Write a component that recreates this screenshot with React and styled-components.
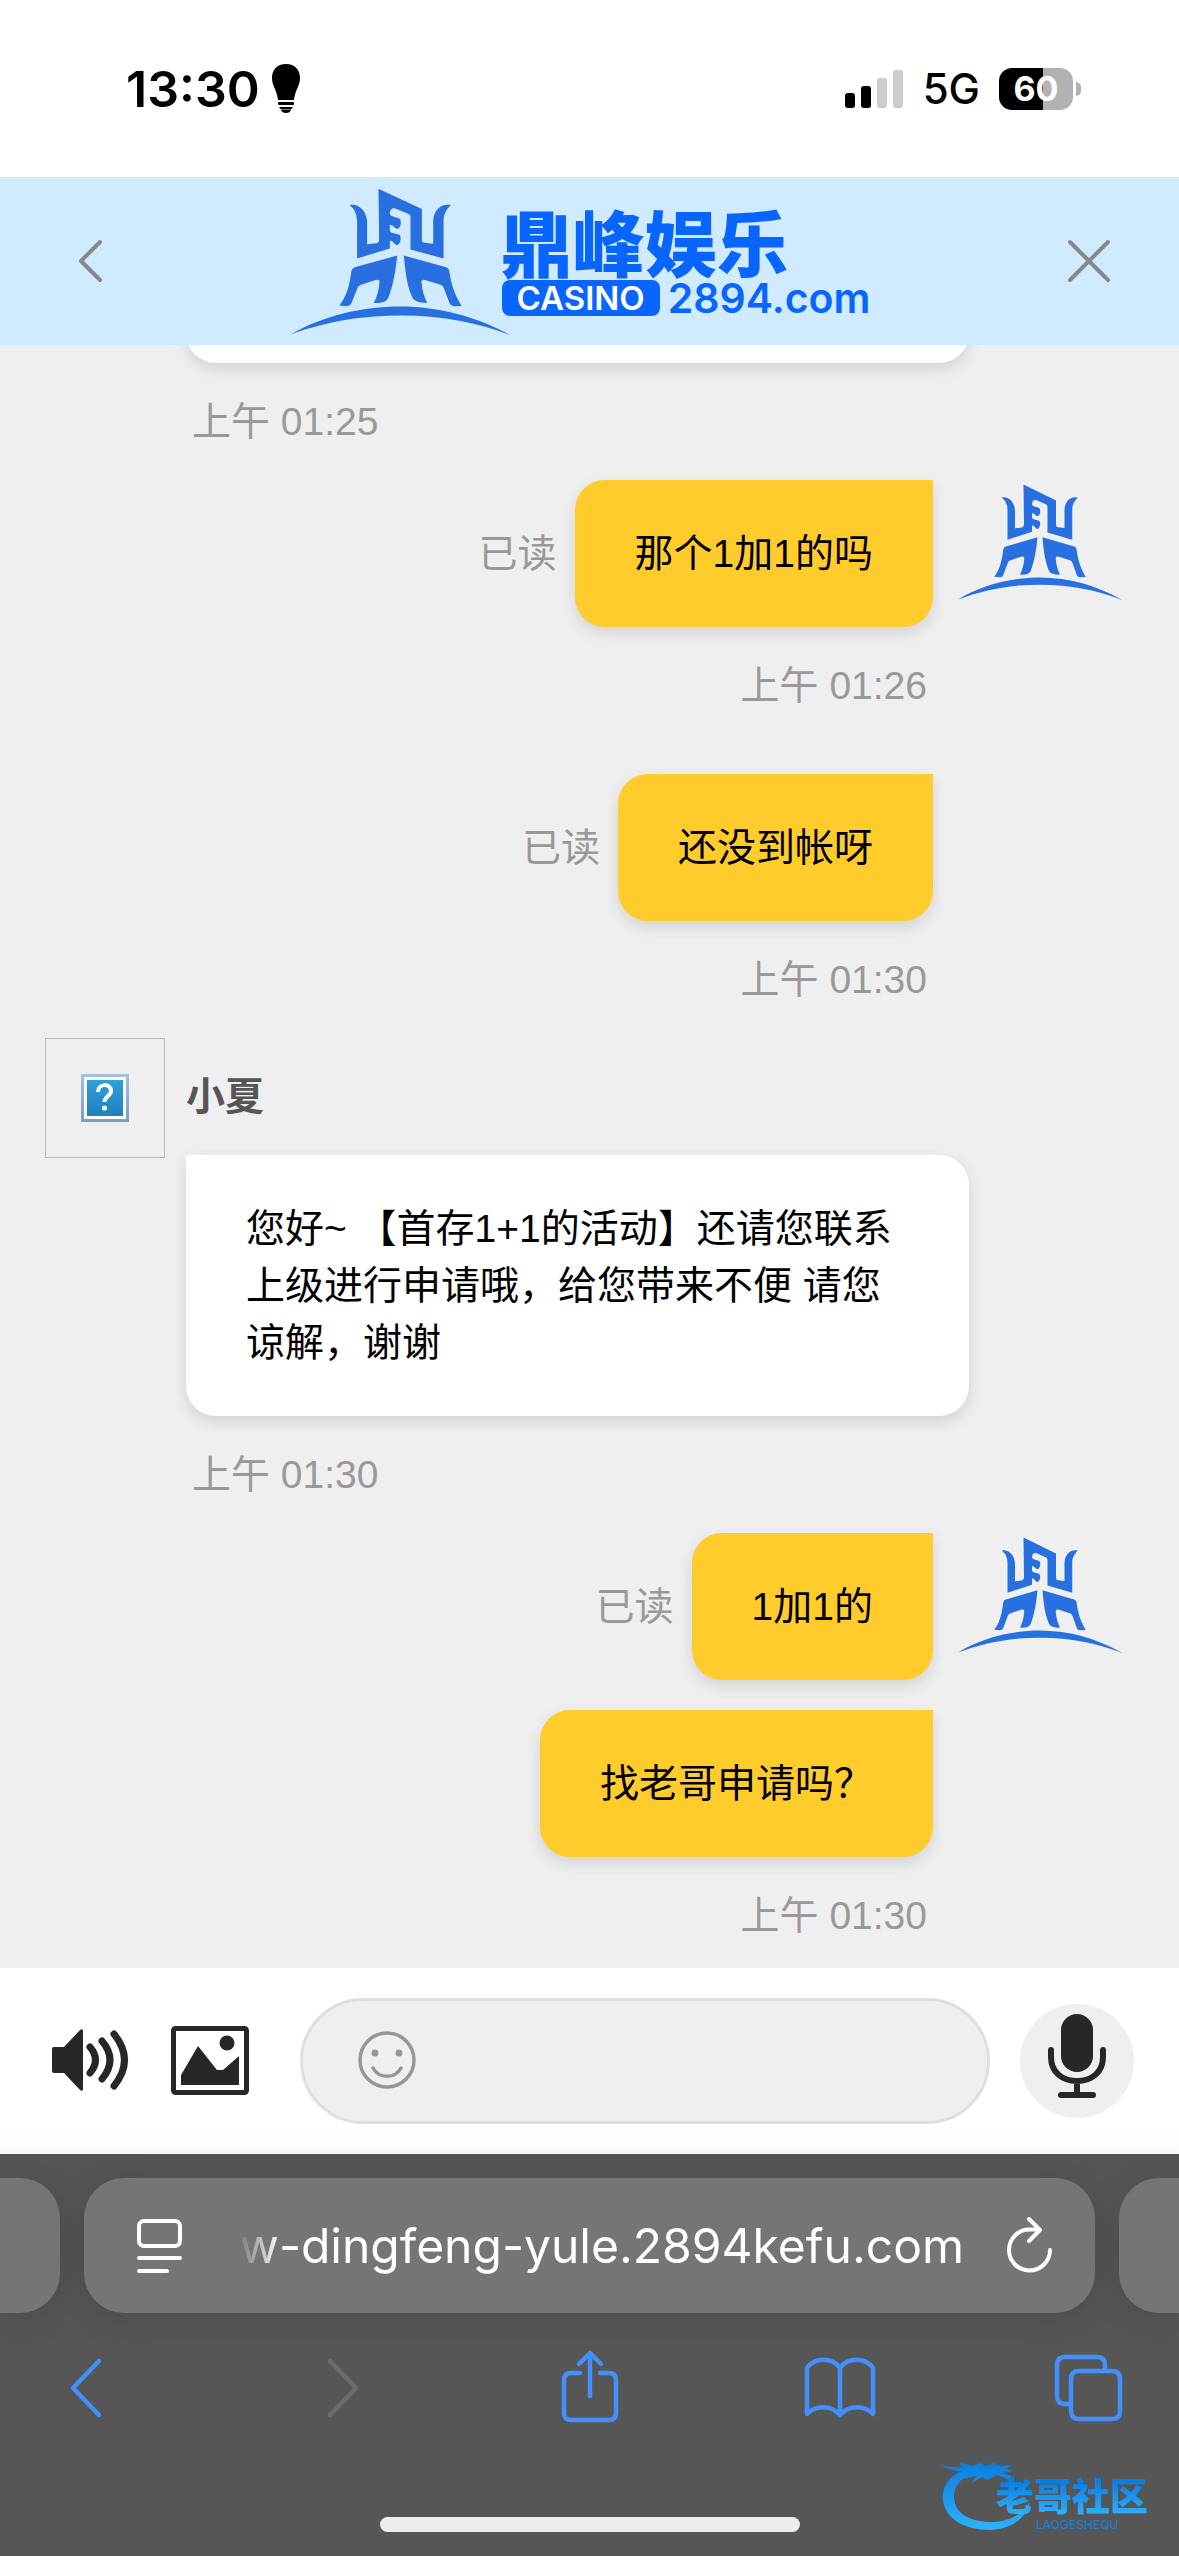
import React from "react";
import styled, { createGlobalStyle } from "styled-components";

const GlobalStyle = createGlobalStyle`
  * {
    box-sizing: border-box;
  }

  body {
    margin: 0;
    font-family: "Liberation Sans", "Noto Sans CJK SC", sans-serif;
  }

  button {
    display: flex;
    flex-shrink: 0;
    align-items: center;
    justify-content: center;
    padding: 0;
    border: none;
    background: none;
    cursor: pointer;
  }

  svg {
    display: block;
  }
`;

const Page = styled.div`
  display: flex;
  flex-direction: column;
  height: 100vh;
  background-color: #efefef;
`;

const StatusBar = styled.div`
  display: flex;
  flex-shrink: 0;
  align-items: center;
  justify-content: space-between;
  height: 177px;
  padding: 0 98px 0 126px;
  background-color: #fff;
  font-family: Inter, sans-serif;
`;

const StatusGroup = styled.div`
  display: flex;
  align-items: center;
  gap: ${(props) => props.$gap}px;
`;

const Clock = styled.span`
  font-size: 50px;
  font-weight: 600;
  line-height: 60px;
`;

const Network = styled.span`
  font-size: 42px;
  font-weight: 500;
  line-height: 60px;
`;

const Battery = styled.div`
  position: relative;
  display: flex;
  align-items: center;
  justify-content: center;
  width: 74px;
  height: 42px;
  margin-right: 8px;
  border-radius: 13px;
  background: linear-gradient(to right, #000 60%, #b2b2b2 60%);
  color: #fff;
  font-size: 34px;
  font-weight: 700;

  &::after {
    content: "";
    position: absolute;
    right: -8px;
    width: 5px;
    height: 14px;
    border-radius: 0 5px 5px 0;
    background-color: #b2b2b2;
  }
`;

const Header = styled.header`
  display: flex;
  flex-shrink: 0;
  align-items: center;
  justify-content: space-between;
  height: 168px;
  padding: 0 69px;
  background-color: #d0eaff;
`;

const Brand = styled.a`
  display: flex;
  align-items: center;
  color: #0865ff;
  text-decoration: none;
`;

const BrandText = styled.div`
  width: 394px;
  margin-left: -15px;
`;

const BrandName = styled.div`
  margin-bottom: 6px;
  padding-left: 6px;
  font-family: "Noto Sans CJK SC", sans-serif;
  font-size: 72px;
  font-weight: 900;
  line-height: 68px;
  white-space: nowrap;
`;

const BrandSite = styled.div`
  display: flex;
  align-items: center;
  gap: 8px;
  padding-left: 7px;
  font-family: Inter, sans-serif;
  font-size: 41px;
  font-weight: 600;
  line-height: 36px;
`;

const CasinoTag = styled.span`
  padding: 0 15px;
  border-radius: 8px;
  background-color: #0865ff;
  color: #fff;
  font-size: 33px;
`;

const Chat = styled.main`
  flex: 1;
  min-height: 0;
  overflow-y: auto;
  scrollbar-width: none;
`;

const Incoming = styled.section`
  display: flex;
  align-items: flex-start;
  gap: 21px;
  padding: 0 210px 0 45px;
`;

const Outgoing = styled.section`
  display: flex;
  align-items: flex-start;
  justify-content: flex-end;
  gap: 25px;
  padding-right: 57px;
`;

const AvatarSlot = styled.div`
  display: flex;
  flex-shrink: 0;
  justify-content: center;
  width: ${(props) => props.$width}px;
  padding-top: 4px;
`;

const MissingAvatar = styled.div`
  display: flex;
  flex-shrink: 0;
  align-items: center;
  justify-content: center;
  width: 120px;
  height: 120px;
  border: 1px solid #bbb;
`;

const Messages = styled.div`
  display: flex;
  flex: 1;
  flex-direction: column;
  align-items: ${(props) => (props.$own ? "flex-end" : "stretch")};
`;

const MessageRow = styled.div`
  display: flex;
  align-items: center;
  gap: 18px;
  margin-top: ${(props) => (props.$follow ? 30 : 0)}px;
`;

const AgentName = styled.h2`
  margin: 0;
  color: #555;
  font-size: 39px;
  font-weight: 700;
  line-height: 117px;
`;

const Bubble = styled.div`
  min-height: 147px;
  padding: 45px 60px;
  border-radius: ${(props) => (props.$own ? "30px 0 30px 30px" : "0 30px 30px 30px")};
  background-color: ${(props) => (props.$own ? "#ffcc2b" : "#fff")};
  box-shadow: 0 6px 15px rgba(0, 0, 0, 0.12);
  color: #000;
  font-size: 39px;
  line-height: 57px;
`;

// Only the lower edge of this one is left in view under the header
const ScrolledBubble = styled(Bubble)`
  margin-top: -129px;
`;

const ReadMark = styled.span`
  color: #999;
  font-size: 39px;
  line-height: 57px;
`;

const Time = styled.time`
  display: block;
  padding: 0 6px;
  color: #999;
  font-size: 39px;
  line-height: 117px;
`;

const Composer = styled.form`
  display: flex;
  flex-shrink: 0;
  align-items: center;
  height: 186px;
  padding: 0 45px 0 52px;
  background: linear-gradient(#fff 85%, #fafafa);
`;

const ToolButton = styled.button`
  margin-right: ${(props) => props.$space}px;
`;

const InputBox = styled.div`
  display: flex;
  flex: 1;
  align-items: center;
  gap: 24px;
  min-width: 0;
  height: 126px;
  padding: 0 54px;
  border: 3px solid #dfdfdf;
  border-radius: 63px;
  background-color: #efefef;
`;

const MessageInput = styled.input`
  flex: 1;
  min-width: 0;
  border: none;
  outline: none;
  background: none;
  font-family: inherit;
  font-size: 39px;
`;

const MicButton = styled.button`
  width: 114px;
  height: 114px;
  margin-left: 30px;
  border-radius: 50%;
  background-color: #efefef;
`;

const Browser = styled.footer`
  position: relative;
  flex-shrink: 0;
  height: 402px;
  padding-top: 24px;
  overflow: hidden;
  background-color: #565656;
`;

const TabStrip = styled.div`
  display: flex;
  gap: 24px;
`;

const SideTab = styled.div`
  flex-shrink: 0;
  width: 60px;
  height: 135px;
  border-radius: ${(props) => (props.$left ? "0 40px 40px 0" : "40px 0 0 40px")};
  background-color: #757575;
  box-shadow: 0 3px 36px rgba(0, 0, 0, 0.14);
`;

const AddressBar = styled.div`
  display: flex;
  flex: 1;
  align-items: center;
  justify-content: space-between;
  min-width: 0;
  height: 135px;
  padding: 0 41px 0 51px;
  border-radius: 40px;
  background-color: #757575;
  box-shadow: 0 3px 36px rgba(0, 0, 0, 0.14);
`;

const Address = styled.input`
  flex: 1;
  min-width: 0;
  margin: 0 42px 0 54px;
  padding: 0;
  border: none;
  outline: none;
  background: none;
  color: #fff;
  font-family: Inter, sans-serif;
  font-size: 48px;
  text-align: right;
  mask-image: linear-gradient(to right, transparent, #000 42px);
`;

const Toolbar = styled.nav`
  display: flex;
  justify-content: space-between;
  padding: 37px 51px 0;
`;

const HomeIndicator = styled.div`
  width: 420px;
  height: 15px;
  margin: 91px auto 0;
  border-radius: 8px;
  background-color: #ededed;
`;

const Watermark = styled.svg`
  position: absolute;
  right: 0;
  bottom: 0;
`;

function Emblem({ width, height }) {
  return (
    <svg
      width={width}
      height={height}
      viewBox="34 25 656 440"
      preserveAspectRatio="none"
      fill="#286fdf"
      aria-hidden="true"
    >
      <path d="M209 76C214 82 220 84 224 92Q232 105 232 124V236L330 206V183C340 181 342 194 352 196C363 192 365 175 360 166C350 159 334 163 330 152V136C340 133 343 146 352 147C363 145 365 128 361 118C350 110 333 113 330 102C330 92 336 83 346 86L385 102Q392 105 392 112V209L491 236V122C492 100 500 90 513 76C480 70 460 95 460 125V192L434 189Q426 188 426 180V88L296 27L298 178Q298 189 290 190L262 193V125C260 92 235 70 209 76Z" />
      <path d="M352 227L225 262Q217 265 215 273C208 330 197 352 179 377L203 379Q211 378 215 370L233 325Q235 318 242 315L285 301Q300 297 299 307Q297 340 282 369C305 370 321 366 326 352C341 314 348 270 352 227Z" />
      <path d="M372 227L499 262Q506 264 508 272C514 320 528 350 545 378L521 379Q512 378 509 370L492 325Q490 318 484 315L438 301Q424 297 425 307Q427 340 442 369C416 368 402 365 396 350C380 312 376 270 372 227Z" />
      <path d="M34 463C130 408 245 380 362 380C478 380 590 411 690 465C590 427 482 407 365 407C245 407 140 425 34 463Z" />
    </svg>
  );
}

function BulbIcon() {
  return (
    <svg width="30" height="50" viewBox="0 0 30 50">
      <path d="M15 0C6 0 1 6 1 14C1 22 6 26 7 36H23C24 26 29 22 29 14C29 6 24 0 15 0Z" />
      <rect x="7" y="38" width="16" height="3" rx="1" />
      <path d="M8 43H22L20 45.500H10ZM10 46H20Q19 49 15 49T10 46Z" />
    </svg>
  );
}

function SignalIcon() {
  return (
    <svg width="60" height="38" viewBox="0 0 60 38">
      <rect x="1" y="23" width="10" height="15" rx="3" />
      <rect x="17" y="16" width="10" height="22" rx="3" />
      <rect x="33" y="8" width="10" height="30" rx="3" fill="#ccc" />
      <rect x="49" y="0" width="10" height="38" rx="3" fill="#ccc" />
    </svg>
  );
}

function MissingIcon() {
  return (
    <svg width="48" height="48" viewBox="0 0 48 48">
      <defs>
        <linearGradient id="missingFrame" x1="0" y1="0" x2="0" y2="1">
          <stop offset="0" stopColor="#a3c0de" />
          <stop offset="1" stopColor="#789dcb" />
        </linearGradient>
        <linearGradient id="missingFill" x1="0" y1="0" x2="0" y2="1">
          <stop offset="0" stopColor="#2fa0d8" />
          <stop offset="1" stopColor="#2080c0" />
        </linearGradient>
      </defs>
      <rect width="48" height="48" fill="url(#missingFrame)" />
      <rect x="3" y="3" width="42" height="42" fill="#fff" />
      <rect x="6" y="6" width="36" height="36" fill="url(#missingFill)" />
      <path d="M17 18C17 9 30 9 30 17C30 22 23.500 22 23.500 28" fill="none" stroke="#fff" strokeWidth="4" />
      <circle cx="23.500" cy="34" r="2.600" fill="#fff" />
    </svg>
  );
}

function SpeakerIcon() {
  return (
    <svg width="77" height="64" viewBox="0 0 77 64" fill="none" stroke="#272727" strokeLinecap="round">
      <path
        d="M2 18H12L28 1Q31 -1 31 2V60Q31 63 28 61L12 44H2Q0 44 0 42V20Q0 18 2 18Z"
        fill="#272727"
        stroke="none"
      />
      <path d="M38 18Q49 31 38 44M50 12Q66 31 50 50M62 5Q83 31 62 57" strokeWidth="7" />
    </svg>
  );
}

function PictureIcon() {
  return (
    <svg width="78" height="70" viewBox="0 0 78 70" fill="#272727">
      <rect x="2.500" y="2.500" width="73" height="64" rx="2" fill="none" stroke="#272727" strokeWidth="5" />
      <path d="M10 49L27 20L46 44H52L68 30V59H10Z" />
      <circle cx="56" cy="17" r="7.500" />
    </svg>
  );
}

function SmileIcon() {
  return (
    <svg width="60" height="60" viewBox="0 0 60 60" fill="none" stroke="#969696" strokeWidth="3.500" strokeLinecap="round">
      <circle cx="30" cy="29" r="27" />
      <path d="M16 37C22 48 38 48 44 37" />
      <circle cx="18" cy="22" r="3.500" fill="#969696" stroke="none" />
      <circle cx="42" cy="22" r="3.500" fill="#969696" stroke="none" />
    </svg>
  );
}

function MicIcon() {
  return (
    <svg width="60" height="94" viewBox="0 0 60 94" fill="none" stroke="#272727" strokeWidth="6" strokeLinecap="round">
      <rect x="14" y="0" width="32" height="58" rx="16" fill="#272727" stroke="none" />
      <path d="M4 36V43C4 58 15 67 30 67S56 58 56 43V36M30 68V80M14 81H46" />
    </svg>
  );
}

// Thin stroked icon of the browser tool bar
function ToolbarIcon({ color = "#448fff", d }) {
  return (
    <svg
      width="76"
      height="76"
      viewBox="0 0 76 76"
      fill="none"
      stroke={color}
      strokeWidth="4.500"
      strokeLinecap="round"
      strokeLinejoin="round"
    >
      <path d={d} />
    </svg>
  );
}

const toolbarItems = [
  { label: "后退", d: "M48 11L22 38L48 65" },
  { label: "前进", d: "M29 11L55 38L29 65", color: "#6b6b6b", disabled: true },
  {
    label: "分享",
    d: "M38 46V4M27 14L38 3L49 14M28 23H19Q12 23 12 30V63Q12 70 19 70H57Q64 70 64 63V30Q64 23 57 23H48",
  },
  {
    label: "书签",
    d: "M38 18C30 7 13 7 5 18V64C14 55 30 55 38 65C46 55 62 55 71 64V18C63 7 46 7 38 18ZM38 18V65",
  },
  {
    label: "标签页",
    d: "M27 21H60Q68 21 68 29V61Q68 69 60 69H27Q19 69 19 61V29Q19 21 27 21ZM18 54H13Q5 54 5 46V15Q5 7 13 7H45Q53 7 53 15V20",
  },
];

function WatermarkLogo() {
  return (
    <Watermark width="259" height="116" viewBox="0 0 259 116" aria-hidden="true">
      <defs>
        <linearGradient id="dragon" gradientUnits="userSpaceOnUse" x1="0" y1="22" x2="0" y2="88">
          <stop offset="0" stopColor="#087ee0" />
          <stop offset="1" stopColor="#2db0fc" />
        </linearGradient>
        <linearGradient id="dragonText" gradientUnits="userSpaceOnUse" x1="0" y1="42" x2="0" y2="74">
          <stop offset="0" stopColor="#087ee4" />
          <stop offset="1" stopColor="#2db0fc" />
        </linearGradient>
      </defs>
      <g fill="url(#dragon)">
        <path d="M50 29C31 32 22 45 23 60C25 79 45 90 70 90C91 89 107 78 110 62C102 75 88 82 71 82C50 82 34 73 34 57C34 47 39 39 50 35Z" />
        <path d="M21 25Q30 28 42 27L39 22L53 26L59 23L66 26L74 23L80 26L92 25L86 29L93 31L82 33L92 36L88 39L76 35L68 40L62 37L52 43L56 36L43 39L47 31Q30 32 21 25Z" />
      </g>
      <path d="M51 18Q66 25 78 25M65 17Q84 14 93 26" fill="none" stroke="#2a6695" strokeWidth="1" opacity="0.5" />
      <text
        x="76"
        y="70"
        fill="url(#dragonText)"
        fontFamily="Noto Sans CJK SC, sans-serif"
        fontSize="38"
        fontWeight="900"
      >
        老哥社区
      </text>
      <text x="116" y="89" fill="#1c7cc4" fontFamily="Inter, sans-serif" fontSize="12" fontWeight="500">
        LAOGESHEQU
      </text>
    </Watermark>
  );
}

function OwnGroup({ avatar, messages, time, follow }) {
  return (
    <Outgoing>
      <Messages $own>
        {messages.map((message, index) => (
          <MessageRow key={message.text} $follow={follow || index > 0}>
            {message.read && <ReadMark>已读</ReadMark>}
            <Bubble $own>{message.text}</Bubble>
          </MessageRow>
        ))}
        <Time>{time}</Time>
      </Messages>
      <AvatarSlot $width={164}>{avatar && <Emblem width={164} height={116} />}</AvatarSlot>
    </Outgoing>
  );
}

export default function App() {
  return (
    <>
      <GlobalStyle />
      <Page>
        <StatusBar>
          <StatusGroup $gap={11}>
            <Clock>13:30</Clock>
            <BulbIcon />
          </StatusGroup>
          <StatusGroup $gap={19}>
            <SignalIcon />
            <Network>5G</Network>
            <Battery>60</Battery>
          </StatusGroup>
        </StatusBar>

        <Header>
          <button type="button" aria-label="返回">
            <svg width="42" height="46" viewBox="0 0 42 46" fill="none" stroke="#888" strokeWidth="4" strokeLinecap="round" strokeLinejoin="round">
              <path d="M31 4L12 23L31 42" />
            </svg>
          </button>
          <Brand href="#">
            <Emblem width={219} height={147} />
            <BrandText>
              <BrandName>鼎峰娱乐</BrandName>
              <BrandSite>
                <CasinoTag>CASINO</CasinoTag>
                2894.com
              </BrandSite>
            </BrandText>
          </Brand>
          <button type="button" aria-label="关闭">
            <svg width="42" height="46" viewBox="0 0 42 46" fill="none" stroke="#888" strokeWidth="4" strokeLinecap="round">
              <path d="M2 4L40 42M40 4L2 42" />
            </svg>
          </button>
        </Header>

        <Chat>
          <Incoming>
            <AvatarSlot $width={120} />
            <Messages>
              <ScrolledBubble />
              <Time>上午 01:25</Time>
            </Messages>
          </Incoming>

          <OwnGroup avatar messages={[{ text: "那个1加1的吗", read: true }]} time="上午 01:26" />
          <OwnGroup follow messages={[{ text: "还没到帐呀", read: true }]} time="上午 01:30" />

          <Incoming>
            <MissingAvatar>
              <MissingIcon />
            </MissingAvatar>
            <Messages>
              <AgentName>小夏</AgentName>
              <Bubble>
                您好~ 【首存1+1的活动】还请您联系上级进行申请哦，给您带来不便 请您谅解，谢谢
              </Bubble>
              <Time>上午 01:30</Time>
            </Messages>
          </Incoming>

          <OwnGroup
            avatar
            messages={[{ text: "1加1的", read: true }, { text: "找老哥申请吗？" }]}
            time="上午 01:30"
          />
        </Chat>

        <Composer onSubmit={(e) => e.preventDefault()}>
          <ToolButton type="button" aria-label="声音" $space={42}>
            <SpeakerIcon />
          </ToolButton>
          <ToolButton type="button" aria-label="图片" $space={51}>
            <PictureIcon />
          </ToolButton>
          <InputBox>
            <button type="button" aria-label="表情">
              <SmileIcon />
            </button>
            <MessageInput type="text" aria-label="消息" />
          </InputBox>
          <MicButton type="button" aria-label="语音">
            <MicIcon />
          </MicButton>
        </Composer>

        <Browser>
          <TabStrip>
            <SideTab $left />
            <AddressBar>
              <button type="button" aria-label="页面设置">
                <svg width="49" height="56" viewBox="0 0 49 56" fill="none" stroke="#fff" strokeWidth="4" strokeLinecap="round">
                  <rect x="4" y="3" width="41" height="25" rx="5" />
                  <path d="M4 40H45M4 53H32" />
                </svg>
              </button>
              <Address type="text" aria-label="网址" readOnly value="w-dingfeng-yule.2894kefu.com" />
              <button type="button" aria-label="刷新">
                <svg width="48" height="62" viewBox="0 0 48 62" fill="none" stroke="#fff" strokeWidth="4" strokeLinecap="round" strokeLinejoin="round">
                  <path d="M44 35A20.500 20.500 0 1 1 23.500 14.500H33M23 4L34 15L23 26" />
                </svg>
              </button>
            </AddressBar>
            <SideTab />
          </TabStrip>
          <Toolbar>
            {toolbarItems.map((item) => (
              <button key={item.label} type="button" aria-label={item.label} disabled={item.disabled}>
                <ToolbarIcon color={item.color} d={item.d} />
              </button>
            ))}
          </Toolbar>
          <HomeIndicator />
          <WatermarkLogo />
        </Browser>
      </Page>
    </>
  );
}
